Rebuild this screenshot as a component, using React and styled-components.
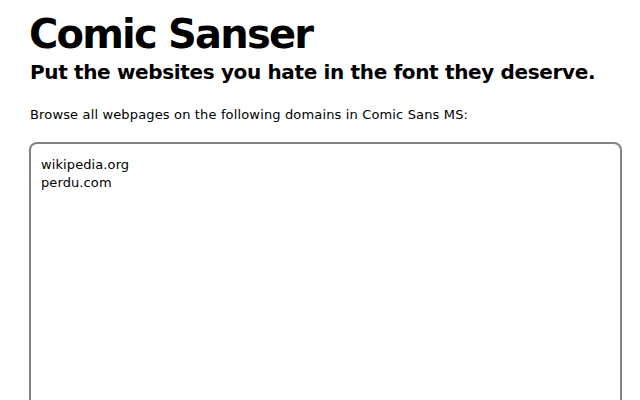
import React from 'react';
import styled, { createGlobalStyle } from 'styled-components';

const GlobalStyle = createGlobalStyle`
  html, body {
    margin: 0;
    padding: 0;
    background: #fff;
  }
  body {
    font-family: "Comic Sans MS", "DejaVu Sans", sans-serif;
    color: #000;
  }
`;

const Page = styled.div`
  height: 100vh;
  overflow: hidden;
  box-sizing: border-box;
  padding: 6px 18px 0 29px;
  display: flex;
  flex-direction: column;
`;

const Title = styled.h1`
  margin: 0;
  font-size: 40px;
  line-height: 56px;
  font-weight: bold;
  letter-spacing: -1.8px;
`;

const Tagline = styled.h2`
  margin: -3px 0 0 1px;
  font-size: 20px;
  line-height: 26px;
  font-weight: bold;
  letter-spacing: -0.35px;
`;

const Intro = styled.p`
  margin: 21px 0 0 1px;
  font-size: 13px;
  line-height: 18px;
  letter-spacing: 0.15px;
`;

const DomainBox = styled.textarea`
  flex: none;
  margin-top: 18px;
  width: 100%;
  height: 290px;
  box-sizing: border-box;
  border: 2px solid #838383;
  border-radius: 8px;
  padding: 12px 10px;
  font-family: "Comic Sans MS", "DejaVu Sans", sans-serif;
  font-size: 13px;
  line-height: 18px;
  letter-spacing: 0.1px;
  color: #000;
  caret-color: #000;
  resize: none;
  outline: none;
`;

const App = () => {
  const [domains, setDomains] = React.useState('wikipedia.org\nperdu.com');
  const boxRef = React.useRef(null);

  React.useEffect(() => {
    // put the caret after the last domain, like the user just typed it
    const el = boxRef.current;
    if (el) {
      el.focus();
      el.setSelectionRange(el.value.length, el.value.length);
    }
  }, []);

  return (
    <>
      <GlobalStyle />
      <Page>
        <Title>Comic Sanser</Title>
        <Tagline>Put the websites you hate in the font they deserve.</Tagline>
        <Intro>Browse all webpages on the following domains in Comic Sans MS:</Intro>
        <DomainBox ref={boxRef} value={domains} onChange={e => setDomains(e.target.value)} />
      </Page>
    </>
  );
};

export default App;
